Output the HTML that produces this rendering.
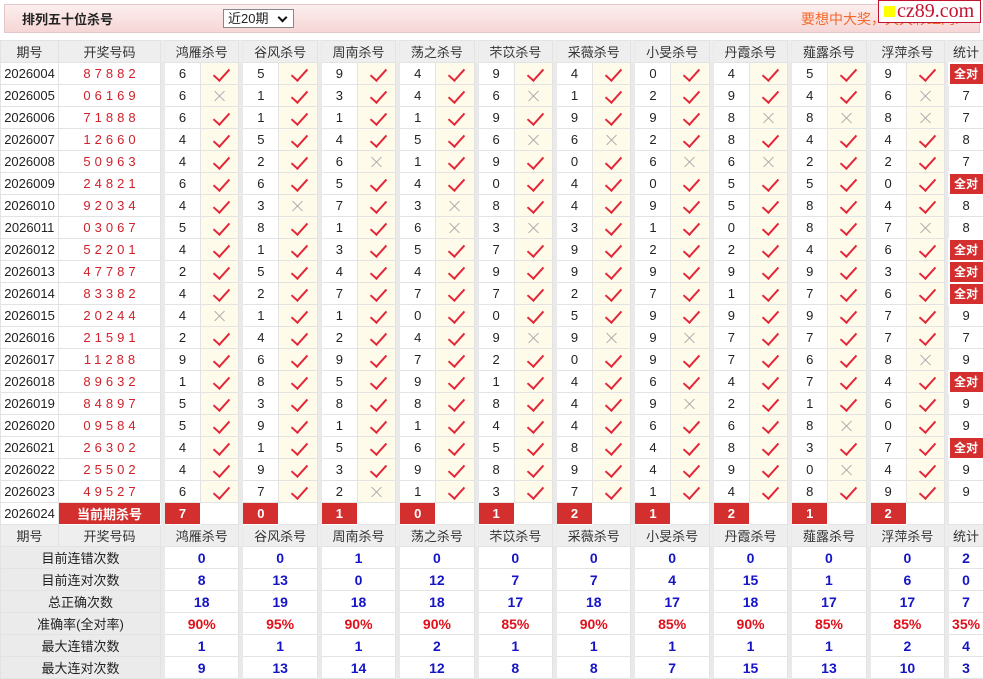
<!DOCTYPE html>
<html><head><meta charset="utf-8"><style>
*{margin:0;padding:0;box-sizing:border-box}
body{width:983px;height:678px;background:#fff;font-family:"Liberation Sans","Noto Sans CJK SC",sans-serif;font-size:13px;color:#222;position:relative;overflow:hidden}
.bar{position:absolute;left:4px;top:4px;width:976px;height:29px;border:1px solid #e2c8c8;background:linear-gradient(#fdeeee,#f6d6d6)}
.bar b{position:absolute;left:17px;top:4px;font-size:13px;color:#222}
.sel{position:absolute;left:218px;top:4px;width:71px;height:19px;border:1px solid #888;background:#fff;font-size:13px;padding-left:4px;line-height:17px}
.sel:after{content:"";position:absolute;right:7px;top:4px;width:5px;height:5px;border-right:2px solid #111;border-bottom:2px solid #111;transform:rotate(45deg)}
.ad{position:absolute;left:796px;top:4px;color:#f36a2c;font-size:14px}
.logo{position:absolute;left:878px;top:0;width:103px;height:23px;background:#fff;border:1px solid #c4122f;font-family:"Liberation Serif",serif;color:#c4122f;font-size:20px;line-height:21px;padding-left:18px}
.logo:before{content:"";position:absolute;left:5px;top:5px;width:11px;height:11px;background:#ff0}
table{position:absolute;left:0;top:40px;width:983px;border-collapse:collapse;table-layout:fixed}
td{height:22px;border:1px solid #e3e3e3;text-align:center;padding:0;white-space:nowrap;overflow:hidden;position:relative}
tr.h td{background:#eeeeee;color:#333}
td.s{background:#e9e9e9;border-color:#e9e9e9}
td.w{color:#d0202a;letter-spacing:4px;font-size:13px;padding-left:4px}
td.y,td.n{background:#fffbea}
td.y:after{content:"";position:absolute;left:16px;top:2px;width:7px;height:14px;border-right:2px solid #e3283a;border-bottom:2px solid #e3283a;transform:rotate(42deg)}
td.n:before,td.n:after{content:"";position:absolute;left:18px;top:4px;width:1px;height:14px;background:#aaa;transform:rotate(45deg)}
td.n:after{transform:rotate(-45deg)}
td.q{background:#d32f2f;color:#fff;font-weight:bold;font-size:12px;border:2px solid #fff}
td.r{background:#d32f2f;color:#fff;font-weight:bold;border-color:#fff}
td.l{background:#ebebeb}
td.b{color:#1515c8;font-weight:bold;font-size:14px}
td.p{color:#e0101a;font-weight:bold;font-size:14px}
</style></head><body>
<div class="bar"><b>排列五十位杀号</b><div class="sel">近20期</div><div class="ad">要想中大奖，天天彩红网!</div></div>
<div class="logo">cz89.com</div>
<table>
<colgroup><col style="width:58px"><col style="width:102px">
<col style="width:4px"><col style="width:36px"><col style="width:38.4px">
<col style="width:4px"><col style="width:36px"><col style="width:38.4px">
<col style="width:4px"><col style="width:36px"><col style="width:38.4px">
<col style="width:4px"><col style="width:36px"><col style="width:38.4px">
<col style="width:4px"><col style="width:36px"><col style="width:38.4px">
<col style="width:4px"><col style="width:36px"><col style="width:38.4px">
<col style="width:4px"><col style="width:36px"><col style="width:38.4px">
<col style="width:4px"><col style="width:36px"><col style="width:38.4px">
<col style="width:4px"><col style="width:36px"><col style="width:38.4px">
<col style="width:4px"><col style="width:36px"><col style="width:38.4px">
<col style="width:4px"><col style="width:35px"></colgroup>
<tr class="h"><td>期号</td><td>开奖号码</td><td class="s"></td><td colspan="2">鸿雁杀号</td><td class="s"></td><td colspan="2">谷风杀号</td><td class="s"></td><td colspan="2">周南杀号</td><td class="s"></td><td colspan="2">荡之杀号</td><td class="s"></td><td colspan="2">芣苡杀号</td><td class="s"></td><td colspan="2">采薇杀号</td><td class="s"></td><td colspan="2">小旻杀号</td><td class="s"></td><td colspan="2">丹霞杀号</td><td class="s"></td><td colspan="2">薤露杀号</td><td class="s"></td><td colspan="2">浮萍杀号</td><td class="s"></td><td>统计</td></tr>
<tr><td>2026004</td><td class="w">87882</td><td class="s"></td><td>6</td><td class="y"></td><td class="s"></td><td>5</td><td class="y"></td><td class="s"></td><td>9</td><td class="y"></td><td class="s"></td><td>4</td><td class="y"></td><td class="s"></td><td>9</td><td class="y"></td><td class="s"></td><td>4</td><td class="y"></td><td class="s"></td><td>0</td><td class="y"></td><td class="s"></td><td>4</td><td class="y"></td><td class="s"></td><td>5</td><td class="y"></td><td class="s"></td><td>9</td><td class="y"></td><td class="s"></td><td class="q">全对</td></tr>
<tr><td>2026005</td><td class="w">06169</td><td class="s"></td><td>6</td><td class="n"></td><td class="s"></td><td>1</td><td class="y"></td><td class="s"></td><td>3</td><td class="y"></td><td class="s"></td><td>4</td><td class="y"></td><td class="s"></td><td>6</td><td class="n"></td><td class="s"></td><td>1</td><td class="y"></td><td class="s"></td><td>2</td><td class="y"></td><td class="s"></td><td>9</td><td class="y"></td><td class="s"></td><td>4</td><td class="y"></td><td class="s"></td><td>6</td><td class="n"></td><td class="s"></td><td>7</td></tr>
<tr><td>2026006</td><td class="w">71888</td><td class="s"></td><td>6</td><td class="y"></td><td class="s"></td><td>1</td><td class="y"></td><td class="s"></td><td>1</td><td class="y"></td><td class="s"></td><td>1</td><td class="y"></td><td class="s"></td><td>9</td><td class="y"></td><td class="s"></td><td>9</td><td class="y"></td><td class="s"></td><td>9</td><td class="y"></td><td class="s"></td><td>8</td><td class="n"></td><td class="s"></td><td>8</td><td class="n"></td><td class="s"></td><td>8</td><td class="n"></td><td class="s"></td><td>7</td></tr>
<tr><td>2026007</td><td class="w">12660</td><td class="s"></td><td>4</td><td class="y"></td><td class="s"></td><td>5</td><td class="y"></td><td class="s"></td><td>4</td><td class="y"></td><td class="s"></td><td>5</td><td class="y"></td><td class="s"></td><td>6</td><td class="n"></td><td class="s"></td><td>6</td><td class="n"></td><td class="s"></td><td>2</td><td class="y"></td><td class="s"></td><td>8</td><td class="y"></td><td class="s"></td><td>4</td><td class="y"></td><td class="s"></td><td>4</td><td class="y"></td><td class="s"></td><td>8</td></tr>
<tr><td>2026008</td><td class="w">50963</td><td class="s"></td><td>4</td><td class="y"></td><td class="s"></td><td>2</td><td class="y"></td><td class="s"></td><td>6</td><td class="n"></td><td class="s"></td><td>1</td><td class="y"></td><td class="s"></td><td>9</td><td class="y"></td><td class="s"></td><td>0</td><td class="y"></td><td class="s"></td><td>6</td><td class="n"></td><td class="s"></td><td>6</td><td class="n"></td><td class="s"></td><td>2</td><td class="y"></td><td class="s"></td><td>2</td><td class="y"></td><td class="s"></td><td>7</td></tr>
<tr><td>2026009</td><td class="w">24821</td><td class="s"></td><td>6</td><td class="y"></td><td class="s"></td><td>6</td><td class="y"></td><td class="s"></td><td>5</td><td class="y"></td><td class="s"></td><td>4</td><td class="y"></td><td class="s"></td><td>0</td><td class="y"></td><td class="s"></td><td>4</td><td class="y"></td><td class="s"></td><td>0</td><td class="y"></td><td class="s"></td><td>5</td><td class="y"></td><td class="s"></td><td>5</td><td class="y"></td><td class="s"></td><td>0</td><td class="y"></td><td class="s"></td><td class="q">全对</td></tr>
<tr><td>2026010</td><td class="w">92034</td><td class="s"></td><td>4</td><td class="y"></td><td class="s"></td><td>3</td><td class="n"></td><td class="s"></td><td>7</td><td class="y"></td><td class="s"></td><td>3</td><td class="n"></td><td class="s"></td><td>8</td><td class="y"></td><td class="s"></td><td>4</td><td class="y"></td><td class="s"></td><td>9</td><td class="y"></td><td class="s"></td><td>5</td><td class="y"></td><td class="s"></td><td>8</td><td class="y"></td><td class="s"></td><td>4</td><td class="y"></td><td class="s"></td><td>8</td></tr>
<tr><td>2026011</td><td class="w">03067</td><td class="s"></td><td>5</td><td class="y"></td><td class="s"></td><td>8</td><td class="y"></td><td class="s"></td><td>1</td><td class="y"></td><td class="s"></td><td>6</td><td class="n"></td><td class="s"></td><td>3</td><td class="n"></td><td class="s"></td><td>3</td><td class="y"></td><td class="s"></td><td>1</td><td class="y"></td><td class="s"></td><td>0</td><td class="y"></td><td class="s"></td><td>8</td><td class="y"></td><td class="s"></td><td>7</td><td class="n"></td><td class="s"></td><td>8</td></tr>
<tr><td>2026012</td><td class="w">52201</td><td class="s"></td><td>4</td><td class="y"></td><td class="s"></td><td>1</td><td class="y"></td><td class="s"></td><td>3</td><td class="y"></td><td class="s"></td><td>5</td><td class="y"></td><td class="s"></td><td>7</td><td class="y"></td><td class="s"></td><td>9</td><td class="y"></td><td class="s"></td><td>2</td><td class="y"></td><td class="s"></td><td>2</td><td class="y"></td><td class="s"></td><td>4</td><td class="y"></td><td class="s"></td><td>6</td><td class="y"></td><td class="s"></td><td class="q">全对</td></tr>
<tr><td>2026013</td><td class="w">47787</td><td class="s"></td><td>2</td><td class="y"></td><td class="s"></td><td>5</td><td class="y"></td><td class="s"></td><td>4</td><td class="y"></td><td class="s"></td><td>4</td><td class="y"></td><td class="s"></td><td>9</td><td class="y"></td><td class="s"></td><td>9</td><td class="y"></td><td class="s"></td><td>9</td><td class="y"></td><td class="s"></td><td>9</td><td class="y"></td><td class="s"></td><td>9</td><td class="y"></td><td class="s"></td><td>3</td><td class="y"></td><td class="s"></td><td class="q">全对</td></tr>
<tr><td>2026014</td><td class="w">83382</td><td class="s"></td><td>4</td><td class="y"></td><td class="s"></td><td>2</td><td class="y"></td><td class="s"></td><td>7</td><td class="y"></td><td class="s"></td><td>7</td><td class="y"></td><td class="s"></td><td>7</td><td class="y"></td><td class="s"></td><td>2</td><td class="y"></td><td class="s"></td><td>7</td><td class="y"></td><td class="s"></td><td>1</td><td class="y"></td><td class="s"></td><td>7</td><td class="y"></td><td class="s"></td><td>6</td><td class="y"></td><td class="s"></td><td class="q">全对</td></tr>
<tr><td>2026015</td><td class="w">20244</td><td class="s"></td><td>4</td><td class="n"></td><td class="s"></td><td>1</td><td class="y"></td><td class="s"></td><td>1</td><td class="y"></td><td class="s"></td><td>0</td><td class="y"></td><td class="s"></td><td>0</td><td class="y"></td><td class="s"></td><td>5</td><td class="y"></td><td class="s"></td><td>9</td><td class="y"></td><td class="s"></td><td>9</td><td class="y"></td><td class="s"></td><td>9</td><td class="y"></td><td class="s"></td><td>7</td><td class="y"></td><td class="s"></td><td>9</td></tr>
<tr><td>2026016</td><td class="w">21591</td><td class="s"></td><td>2</td><td class="y"></td><td class="s"></td><td>4</td><td class="y"></td><td class="s"></td><td>2</td><td class="y"></td><td class="s"></td><td>4</td><td class="y"></td><td class="s"></td><td>9</td><td class="n"></td><td class="s"></td><td>9</td><td class="n"></td><td class="s"></td><td>9</td><td class="n"></td><td class="s"></td><td>7</td><td class="y"></td><td class="s"></td><td>7</td><td class="y"></td><td class="s"></td><td>7</td><td class="y"></td><td class="s"></td><td>7</td></tr>
<tr><td>2026017</td><td class="w">11288</td><td class="s"></td><td>9</td><td class="y"></td><td class="s"></td><td>6</td><td class="y"></td><td class="s"></td><td>9</td><td class="y"></td><td class="s"></td><td>7</td><td class="y"></td><td class="s"></td><td>2</td><td class="y"></td><td class="s"></td><td>0</td><td class="y"></td><td class="s"></td><td>9</td><td class="y"></td><td class="s"></td><td>7</td><td class="y"></td><td class="s"></td><td>6</td><td class="y"></td><td class="s"></td><td>8</td><td class="n"></td><td class="s"></td><td>9</td></tr>
<tr><td>2026018</td><td class="w">89632</td><td class="s"></td><td>1</td><td class="y"></td><td class="s"></td><td>8</td><td class="y"></td><td class="s"></td><td>5</td><td class="y"></td><td class="s"></td><td>9</td><td class="y"></td><td class="s"></td><td>1</td><td class="y"></td><td class="s"></td><td>4</td><td class="y"></td><td class="s"></td><td>6</td><td class="y"></td><td class="s"></td><td>4</td><td class="y"></td><td class="s"></td><td>7</td><td class="y"></td><td class="s"></td><td>4</td><td class="y"></td><td class="s"></td><td class="q">全对</td></tr>
<tr><td>2026019</td><td class="w">84897</td><td class="s"></td><td>5</td><td class="y"></td><td class="s"></td><td>3</td><td class="y"></td><td class="s"></td><td>8</td><td class="y"></td><td class="s"></td><td>8</td><td class="y"></td><td class="s"></td><td>8</td><td class="y"></td><td class="s"></td><td>4</td><td class="y"></td><td class="s"></td><td>9</td><td class="n"></td><td class="s"></td><td>2</td><td class="y"></td><td class="s"></td><td>1</td><td class="y"></td><td class="s"></td><td>6</td><td class="y"></td><td class="s"></td><td>9</td></tr>
<tr><td>2026020</td><td class="w">09584</td><td class="s"></td><td>5</td><td class="y"></td><td class="s"></td><td>9</td><td class="y"></td><td class="s"></td><td>1</td><td class="y"></td><td class="s"></td><td>1</td><td class="y"></td><td class="s"></td><td>4</td><td class="y"></td><td class="s"></td><td>4</td><td class="y"></td><td class="s"></td><td>6</td><td class="y"></td><td class="s"></td><td>6</td><td class="y"></td><td class="s"></td><td>8</td><td class="n"></td><td class="s"></td><td>0</td><td class="y"></td><td class="s"></td><td>9</td></tr>
<tr><td>2026021</td><td class="w">26302</td><td class="s"></td><td>4</td><td class="y"></td><td class="s"></td><td>1</td><td class="y"></td><td class="s"></td><td>5</td><td class="y"></td><td class="s"></td><td>6</td><td class="y"></td><td class="s"></td><td>5</td><td class="y"></td><td class="s"></td><td>8</td><td class="y"></td><td class="s"></td><td>4</td><td class="y"></td><td class="s"></td><td>8</td><td class="y"></td><td class="s"></td><td>3</td><td class="y"></td><td class="s"></td><td>7</td><td class="y"></td><td class="s"></td><td class="q">全对</td></tr>
<tr><td>2026022</td><td class="w">25502</td><td class="s"></td><td>4</td><td class="y"></td><td class="s"></td><td>9</td><td class="y"></td><td class="s"></td><td>3</td><td class="y"></td><td class="s"></td><td>9</td><td class="y"></td><td class="s"></td><td>8</td><td class="y"></td><td class="s"></td><td>9</td><td class="y"></td><td class="s"></td><td>4</td><td class="y"></td><td class="s"></td><td>9</td><td class="y"></td><td class="s"></td><td>0</td><td class="n"></td><td class="s"></td><td>4</td><td class="y"></td><td class="s"></td><td>9</td></tr>
<tr><td>2026023</td><td class="w">49527</td><td class="s"></td><td>6</td><td class="y"></td><td class="s"></td><td>7</td><td class="y"></td><td class="s"></td><td>2</td><td class="n"></td><td class="s"></td><td>1</td><td class="y"></td><td class="s"></td><td>3</td><td class="y"></td><td class="s"></td><td>7</td><td class="y"></td><td class="s"></td><td>1</td><td class="y"></td><td class="s"></td><td>4</td><td class="y"></td><td class="s"></td><td>8</td><td class="y"></td><td class="s"></td><td>9</td><td class="y"></td><td class="s"></td><td>9</td></tr>
<tr><td>2026024</td><td class="r">当前期杀号</td><td class="s"></td><td class="r">7</td><td></td><td class="s"></td><td class="r">0</td><td></td><td class="s"></td><td class="r">1</td><td></td><td class="s"></td><td class="r">0</td><td></td><td class="s"></td><td class="r">1</td><td></td><td class="s"></td><td class="r">2</td><td></td><td class="s"></td><td class="r">1</td><td></td><td class="s"></td><td class="r">2</td><td></td><td class="s"></td><td class="r">1</td><td></td><td class="s"></td><td class="r">2</td><td></td><td class="s"></td><td></td></tr>
<tr class="h"><td>期号</td><td>开奖号码</td><td class="s"></td><td colspan="2">鸿雁杀号</td><td class="s"></td><td colspan="2">谷风杀号</td><td class="s"></td><td colspan="2">周南杀号</td><td class="s"></td><td colspan="2">荡之杀号</td><td class="s"></td><td colspan="2">芣苡杀号</td><td class="s"></td><td colspan="2">采薇杀号</td><td class="s"></td><td colspan="2">小旻杀号</td><td class="s"></td><td colspan="2">丹霞杀号</td><td class="s"></td><td colspan="2">薤露杀号</td><td class="s"></td><td colspan="2">浮萍杀号</td><td class="s"></td><td>统计</td></tr>
<tr><td class="l" colspan="2">目前连错次数</td><td class="s"></td><td class="b" colspan="2">0</td><td class="s"></td><td class="b" colspan="2">0</td><td class="s"></td><td class="b" colspan="2">1</td><td class="s"></td><td class="b" colspan="2">0</td><td class="s"></td><td class="b" colspan="2">0</td><td class="s"></td><td class="b" colspan="2">0</td><td class="s"></td><td class="b" colspan="2">0</td><td class="s"></td><td class="b" colspan="2">0</td><td class="s"></td><td class="b" colspan="2">0</td><td class="s"></td><td class="b" colspan="2">0</td><td class="s"></td><td class="b">2</td></tr>
<tr><td class="l" colspan="2">目前连对次数</td><td class="s"></td><td class="b" colspan="2">8</td><td class="s"></td><td class="b" colspan="2">13</td><td class="s"></td><td class="b" colspan="2">0</td><td class="s"></td><td class="b" colspan="2">12</td><td class="s"></td><td class="b" colspan="2">7</td><td class="s"></td><td class="b" colspan="2">7</td><td class="s"></td><td class="b" colspan="2">4</td><td class="s"></td><td class="b" colspan="2">15</td><td class="s"></td><td class="b" colspan="2">1</td><td class="s"></td><td class="b" colspan="2">6</td><td class="s"></td><td class="b">0</td></tr>
<tr><td class="l" colspan="2">总正确次数</td><td class="s"></td><td class="b" colspan="2">18</td><td class="s"></td><td class="b" colspan="2">19</td><td class="s"></td><td class="b" colspan="2">18</td><td class="s"></td><td class="b" colspan="2">18</td><td class="s"></td><td class="b" colspan="2">17</td><td class="s"></td><td class="b" colspan="2">18</td><td class="s"></td><td class="b" colspan="2">17</td><td class="s"></td><td class="b" colspan="2">18</td><td class="s"></td><td class="b" colspan="2">17</td><td class="s"></td><td class="b" colspan="2">17</td><td class="s"></td><td class="b">7</td></tr>
<tr><td class="l" colspan="2">准确率(全对率)</td><td class="s"></td><td class="p" colspan="2">90%</td><td class="s"></td><td class="p" colspan="2">95%</td><td class="s"></td><td class="p" colspan="2">90%</td><td class="s"></td><td class="p" colspan="2">90%</td><td class="s"></td><td class="p" colspan="2">85%</td><td class="s"></td><td class="p" colspan="2">90%</td><td class="s"></td><td class="p" colspan="2">85%</td><td class="s"></td><td class="p" colspan="2">90%</td><td class="s"></td><td class="p" colspan="2">85%</td><td class="s"></td><td class="p" colspan="2">85%</td><td class="s"></td><td class="p">35%</td></tr>
<tr><td class="l" colspan="2">最大连错次数</td><td class="s"></td><td class="b" colspan="2">1</td><td class="s"></td><td class="b" colspan="2">1</td><td class="s"></td><td class="b" colspan="2">1</td><td class="s"></td><td class="b" colspan="2">2</td><td class="s"></td><td class="b" colspan="2">1</td><td class="s"></td><td class="b" colspan="2">1</td><td class="s"></td><td class="b" colspan="2">1</td><td class="s"></td><td class="b" colspan="2">1</td><td class="s"></td><td class="b" colspan="2">1</td><td class="s"></td><td class="b" colspan="2">2</td><td class="s"></td><td class="b">4</td></tr>
<tr><td class="l" colspan="2">最大连对次数</td><td class="s"></td><td class="b" colspan="2">9</td><td class="s"></td><td class="b" colspan="2">13</td><td class="s"></td><td class="b" colspan="2">14</td><td class="s"></td><td class="b" colspan="2">12</td><td class="s"></td><td class="b" colspan="2">8</td><td class="s"></td><td class="b" colspan="2">8</td><td class="s"></td><td class="b" colspan="2">7</td><td class="s"></td><td class="b" colspan="2">15</td><td class="s"></td><td class="b" colspan="2">13</td><td class="s"></td><td class="b" colspan="2">10</td><td class="s"></td><td class="b">3</td></tr>
</table>
</body></html>
